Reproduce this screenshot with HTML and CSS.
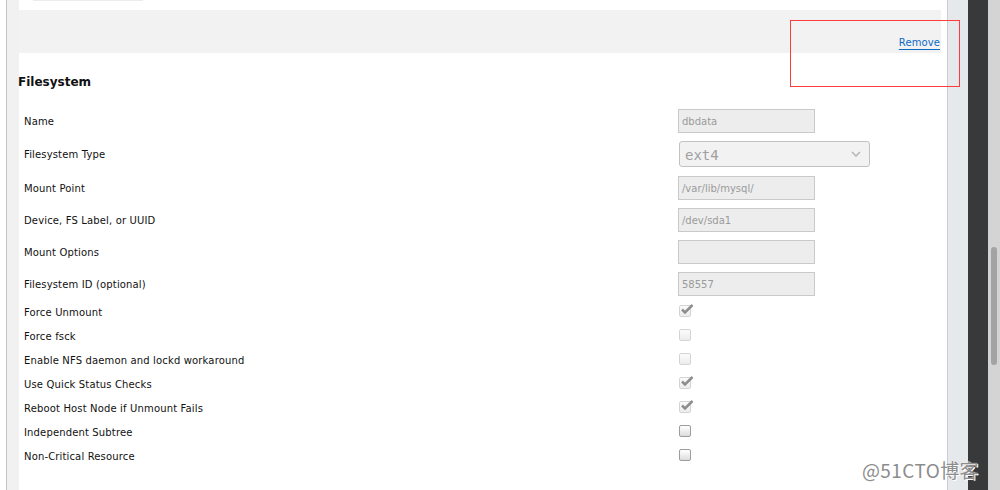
FILE: index.html
```html
<!DOCTYPE html>
<html>
<head>
<meta charset="utf-8">
<link rel="stylesheet" href="styles.css">
</head>
<body>
<div class="page">
  <div class="rail-left"></div>
  <main class="main">
    <div class="top-white"><div class="prev-field"></div></div>
    <div class="band"><a class="remove" href="#">Remove</a></div>
    <section class="fs">
      <h2 class="fs-title">Filesystem</h2>
      <div class="row row-input"><span class="lbl">Name</span><div class="inp">dbdata</div></div>
      <div class="row row-select"><span class="lbl">Filesystem Type</span>
        <div class="sel"><span class="sel-val">ext4</span>
          <svg class="chev" width="10" height="6" viewBox="0 0 10 6"><path d="M1 1 L5 5 L9 1" fill="none" stroke="#b4b4b4" stroke-width="1.5"/></svg>
        </div>
      </div>
      <div class="row row-input"><span class="lbl">Mount Point</span><div class="inp">/var/lib/mysql/</div></div>
      <div class="row row-input"><span class="lbl">Device, FS Label, or UUID</span><div class="inp">/dev/sda1</div></div>
      <div class="row row-input"><span class="lbl">Mount Options</span><div class="inp"></div></div>
      <div class="row row-input last-input"><span class="lbl">Filesystem ID (optional)</span><div class="inp">58557</div></div>
      <div class="row row-check"><span class="lbl">Force Unmount</span><span class="cb dis"><svg class="tick" width="14" height="12" viewBox="0 0 14 12"><path d="M2 6.5 L5 9.5 L12.5 2" fill="none" stroke="#8e8e8e" stroke-width="2.6"/></svg></span></div>
      <div class="row row-check"><span class="lbl">Force fsck</span><span class="cb dis"></span></div>
      <div class="row row-check"><span class="lbl">Enable NFS daemon and lockd workaround</span><span class="cb dis"></span></div>
      <div class="row row-check"><span class="lbl">Use Quick Status Checks</span><span class="cb dis"><svg class="tick" width="14" height="12" viewBox="0 0 14 12"><path d="M2 6.5 L5 9.5 L12.5 2" fill="none" stroke="#8e8e8e" stroke-width="2.6"/></svg></span></div>
      <div class="row row-check"><span class="lbl">Reboot Host Node if Unmount Fails</span><span class="cb dis"><svg class="tick" width="14" height="12" viewBox="0 0 14 12"><path d="M2 6.5 L5 9.5 L12.5 2" fill="none" stroke="#8e8e8e" stroke-width="2.6"/></svg></span></div>
      <div class="row row-check"><span class="lbl">Independent Subtree</span><span class="cb"></span></div>
      <div class="row row-check"><span class="lbl">Non-Critical Resource</span><span class="cb"></span></div>
    </section>
  </main>
  <div class="rail-right"></div>
  <div class="rail-dark"></div>
  <div class="scroll"><div class="thumb"></div></div>
</div>
<div class="annot"></div>
<div class="watermark">@51CTO博客</div>
</body>
</html>
```

FILE: styles.css
```css
html, body { margin: 0; padding: 0; }
body {
  width: 1000px; height: 490px; overflow: hidden; background: #fff;
  font-family: "DejaVu Sans", Verdana, sans-serif; color: #111;
  position: relative;
}
.page { display: flex; height: 490px; padding-left: 6px; }
.rail-left { width: 12px; background: #f1f1f1; border-left: 1px solid #c4c4c4; }
.main { width: 928px; background: #fff; }
.rail-right { width: 20px; background: #e6e9ec; border-left: 1px solid #c9ccd0; }
.rail-dark { width: 20px; background: #38393b; }
.scroll { width: 12px; background: #d4d4d4; position: relative; }
.thumb { position: absolute; left: 3px; top: 247px; width: 6px; height: 118px; border-radius: 3px; background: #a3a3a3; }

.top-white { height: 10px; }
.prev-field { margin-left: 14px; width: 110px; height: 1px; background: #ececec; }
.band {
  height: 43px; margin-right: 6px; background: #f2f2f2;
  display: flex; justify-content: flex-end; align-items: flex-end;
  padding-right: 1px; box-sizing: border-box; padding-bottom: 4px;
}
.remove {
  font-size: 10px; color: #0b6bc4; text-decoration: underline;
  text-underline-offset: 3px; line-height: 12px; letter-spacing: 0.1px;
}
.fs { padding-left: 5px; }
.fs-title {
  margin: 21px 0 0 -6px; font-size: 12px; font-weight: bold; line-height: 16px;
  height: 35px; color: #111;
}
.row { display: grid; grid-template-columns: 654px auto; align-items: center; }
.lbl { font-size: 10px; line-height: 12px; color: #111; padding-top: 1px; letter-spacing: 0.15px; }
.row-check .lbl { padding-top: 3px; }
.row-input { height: 24px; margin-bottom: 8px; }
.row-input.last-input { margin-bottom: 3px; }
.row-select { height: 26px; margin-bottom: 9px; }
.row-check { height: 24px; }
.inp {
  width: 137px; height: 24px; box-sizing: border-box;
  background: #ededed; border: 1px solid #c9c9c9;
  font-size: 10px; color: #9a9a9a; line-height: 22px; padding: 1px 0 0 3px;
}
.sel {
  width: 191px; height: 26px; box-sizing: border-box; margin-left: 1px;
  background: #f2f2f2; border: 1px solid #c2c2c2; border-radius: 3px;
  display: flex; align-items: center; justify-content: space-between;
  padding: 0 8px 0 5px; font-size: 14px; color: #a0a0a0;
  font-family: "DejaVu Sans Mono", monospace;
}
.sel-val { padding-top: 2px; }
.cb {
  position: relative; width: 12px; height: 12px; margin-left: 1px;
  border: 1px solid #9c9c9c; border-radius: 2px; box-sizing: border-box;
  background: linear-gradient(#ffffff, #dcdcdc);
}
.cb.dis { border-color: #d4d4d4; background: linear-gradient(#fbfbfb, #ececec); }
.tick { position: absolute; left: 0px; top: -3px; }

.annot {
  position: absolute; left: 790px; top: 20px; width: 170px; height: 67px;
  box-sizing: border-box; border: 1px solid #ff3b3b;
}
.watermark {
  position: absolute; left: 862px; top: 458px;
  font-family: "Noto Sans CJK SC", "DejaVu Sans", sans-serif; font-size: 19px;
  line-height: 24px; color: #8d8d8d; letter-spacing: 0.4px;
  text-shadow: 0 0 1px #fff, 1px 1px 0 #fff;
}
```
